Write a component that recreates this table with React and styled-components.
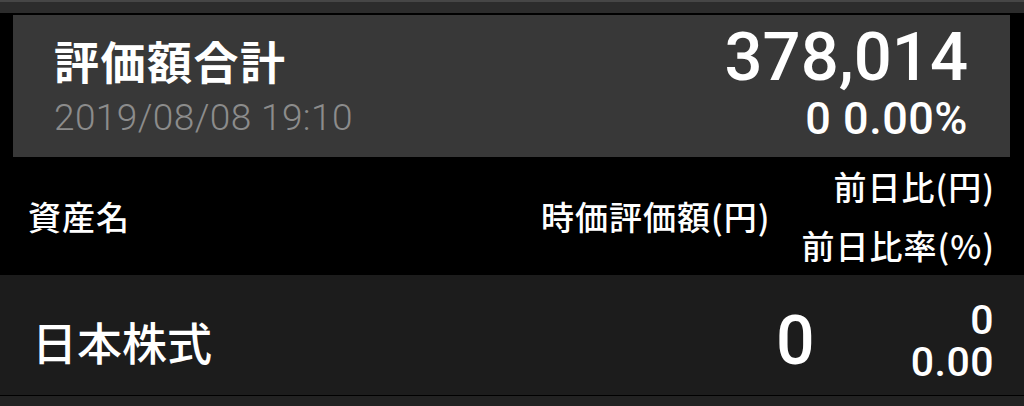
import styled, { createGlobalStyle } from 'styled-components';

const GlobalStyle = createGlobalStyle`
  html, body {
    margin: 0;
    padding: 0;
    background: #000;
  }
  body {
    font-family: Roboto, "Noto Sans CJK JP", sans-serif;
    color: #fff;
  }
`;

const Screen = styled.div`
  width: 1024px;
  height: 406px;
  overflow: hidden;
  background: #000;
  display: flex;
  flex-direction: column;
`;

const TopStrip = styled.div`
  height: 11px;
  flex: none;
  background: #2c2c2c;
  border-top: 2px solid #464646;
`;

const SummaryCard = styled.section`
  flex: none;
  height: 142px;
  margin: 2px 14px 0 13px;
  background: #383838;
  display: flex;
  justify-content: space-between;
  padding: 14px 42px 0 41px;
  box-sizing: border-box;
`;

const SummaryLeft = styled.div`
  display: flex;
  flex-direction: column;
  padding-top: 6px;
`;

const SummaryRight = styled.div`
  display: flex;
  flex-direction: column;
  align-items: flex-end;
`;

const Title = styled.div`
  font-family: "Noto Sans CJK JP", sans-serif;
  font-weight: 700;
  font-size: 45px;
  line-height: 52px;
  letter-spacing: 1.5px;
`;

const Stamp = styled.div`
  margin-top: 5px;
  font-family: Roboto, sans-serif;
  font-weight: 300;
  font-size: 37px;
  line-height: 52px;
  letter-spacing: 0.4px;
  color: #8c8c8c;
`;

const Total = styled.div`
  font-family: Roboto, sans-serif;
  font-weight: 500;
  font-size: 67px;
  line-height: 56px;
`;

const TotalChange = styled.div`
  font-family: Roboto, sans-serif;
  font-weight: 500;
  font-size: 45px;
  line-height: 68px;
  letter-spacing: 0.5px;
`;

const TableHeader = styled.div`
  flex: none;
  height: 118px;
  display: flex;
  align-items: center;
  padding: 0 29px 0 28px;
  font-family: "Noto Sans CJK JP", sans-serif;
  font-weight: 500;
  font-size: 33px;
  letter-spacing: 1px;
`;

const AssetRow = styled.div`
  flex: none;
  height: 121px;
  box-sizing: border-box;
  display: flex;
  align-items: center;
  padding: 12px 30px 0 32px;
  background: #1c1c1c;
  border-bottom: 1px solid #000;
`;

const NameCell = styled.div`
  flex: 1;
  font-family: "Noto Sans CJK JP", sans-serif;
  font-weight: 500;
  font-size: ${p => (p.$big ? '45px' : '33px')};
  letter-spacing: ${p => (p.$big ? '0' : '1px')};
`;

const ValueCell = styled.div`
  text-align: right;
  margin-right: ${p => p.$gap}px;
  font-family: ${p => (p.$digits ? 'Roboto, sans-serif' : '"Noto Sans CJK JP", sans-serif')};
  font-weight: 500;
  font-size: ${p => p.$size}px;
  line-height: 1;
`;

const ChangeCell = styled.div`
  display: flex;
  flex-direction: column;
  align-items: flex-end;
  font-family: ${p => (p.$digits ? 'Roboto, sans-serif' : '"Noto Sans CJK JP", sans-serif')};
  font-weight: 500;
  font-size: ${p => p.$size}px;
  line-height: ${p => p.$lh}px;
  letter-spacing: ${p => (p.$digits ? '0.5px' : '1px')};
`;

const Rest = styled.div`
  flex: 1;
  background: #222;
`;

export default function App() {
  return (
    <>
      <GlobalStyle />
      <Screen>
        <TopStrip />
        <SummaryCard>
          <SummaryLeft>
            <Title>評価額合計</Title>
            <Stamp>2019/08/08 19:10</Stamp>
          </SummaryLeft>
          <SummaryRight>
            <Total>378,014</Total>
            <TotalChange>0 0.00%</TotalChange>
          </SummaryRight>
        </SummaryCard>
        <TableHeader>
          <NameCell>資産名</NameCell>
          <ValueCell $gap={31} $size={33}>時価評価額(円)</ValueCell>
          <ChangeCell $size={33} $lh={59}>
            <span>前日比(円)</span>
            <span>前日比率(%)</span>
          </ChangeCell>
        </TableHeader>
        <AssetRow>
          <NameCell $big>日本株式</NameCell>
          <ValueCell $digits $gap={96} $size={68}>0</ValueCell>
          <ChangeCell $digits $size={41} $lh={42}>
            <span>0</span>
            <span>0.00</span>
          </ChangeCell>
        </AssetRow>
        <Rest />
      </Screen>
    </>
  );
}
